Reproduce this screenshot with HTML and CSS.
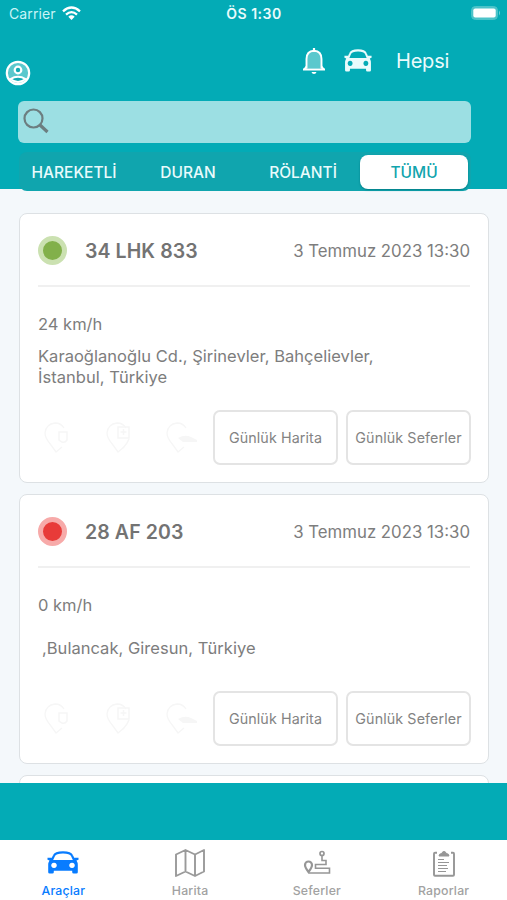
FILE: index.html
```
<!DOCTYPE html>
<html lang="tr">
<head>
<meta charset="utf-8">
<title>Araçlar</title>
<link rel="stylesheet" href="styles.css">
</head>
<body>
<svg class="defs" width="0" height="0" aria-hidden="true">
  <symbol id="car" viewBox="0 0 32 26" preserveAspectRatio="none">
    <path d="M4.800 10 7 5Q8.300 1.500 16 1.500T25 5l2.200 5" fill="none" stroke="currentColor" stroke-width="2.200"/>
    <path fill-rule="evenodd" d="M.5 7.300h4.200l1 2.400h20.600l1-2.400h4.200v2.200l-2 .8Q30.800 12.500 30.800 15v8q0 1.500-1.500 1.500h-2.600q-1.500 0-1.500-1.500v-1.500H6.800V23q0 1.500-1.500 1.500H2.700Q1.200 24.500 1.200 23v-8q0-2.500 1.300-4.700l-2-.8zM7 12.800a2.800 2.800 0 1 0 .01 0zM25 12.800a2.800 2.800 0 1 0 .01 0z" fill="currentColor"/>
  </symbol>
  <symbol id="pin" viewBox="0 0 30 32">
    <path d="M18 25 12 30 7 23Q1 16 1 11 2 2 11 1q6 0 9 5" fill="none" stroke="currentColor" stroke-width="1.300"/>
  </symbol>
</svg>

<header class="header">
  <div class="status">
    <span class="carrier">Carrier
      <svg class="wifi" width="19" height="14" viewBox="0 0 19 14"><g fill="none" stroke="#fff" stroke-width="2.300"><path d="M1 5.300Q9.500-2.300 18 5.300"/><path d="M4 8.600Q9.500 3.600 15 8.600"/></g><path d="M6.300 10.700Q9.500 8 12.700 10.700L9.500 14z" fill="#fff"/></svg>
    </span>
    <span class="clock">ÖS 1:30</span>
    <svg class="battery" width="30" height="14" viewBox="0 0 30 14"><rect x=".5" y=".5" width="26" height="13" rx="4" fill="#4cc3c9" stroke="#4cc3c9"/><rect x="2.300" y="2.500" width="22.400" height="9" rx="2" fill="#fff"/><path d="M28 4.500q2 2.500 0 5z" fill="#70d0d5"/></svg>
  </div>
  <div class="toolbar">
    <svg class="user" width="26" height="26" viewBox="0 0 26 26"><circle cx="13" cy="13" r="11.200" fill="#5bc8cd" stroke="#fff" stroke-width="2.200"/><circle cx="13" cy="10" r="3.300" fill="#12aab3" stroke="#fff" stroke-width="2.200"/><path d="M5.500 19q7.500-4.500 15 0-7.500 6-15 0z" fill="#12aab3" stroke="#fff" stroke-width="2"/></svg>
    <svg class="bell" width="24" height="28" viewBox="0 0 24 28"><path d="M4.500 21.500V12q0-7.700 7.500-8.200 7.500.5 7.500 8.200v9.500" fill="#5bc8cd" stroke="#fff" stroke-width="1.900"/><path d="M1 22.500h22M12 1v3" stroke="#fff" stroke-width="2.200"/><path d="M1 22.500 4.500 18v4zM23 22.500 19.500 18v4zM9.500 25h5q-.5 2-2.500 2t-2.500-2z" fill="#fff"/></svg>
    <svg class="topcar" width="28" height="24"><use href="#car" width="28" height="24"/></svg>
    <span class="all">Hepsi</span>
  </div>
  <div class="search"><svg width="27" height="27" viewBox="0 0 27 27" fill="none" stroke="#6c7e80"><circle cx="10.500" cy="10.500" r="9" stroke-width="2.200"/><path d="m17 17 7.500 7" stroke-width="3.200"/></svg></div>
  <nav class="segments">
    <span class="seg">HAREKETLİ</span><span class="seg">DURAN</span><span class="seg">RÖLANTİ</span><span class="seg active">TÜMÜ</span>
  </nav>
</header>

<main class="list">
  <article class="card">
    <div class="head"><i class="dot green"></i><b class="plate">34 LHK 833</b><time class="date">3 Temmuz 2023 13:30</time></div>
    <p class="speed">24 km/h</p>
    <p class="address">Karaoğlanoğlu Cd., Şirinevler, Bahçelievler,<br>İstanbul, Türkiye</p>
    <div class="actions">
      <svg class="ghost" width="30" height="32" viewBox="0 0 30 32"><use href="#pin" width="30" height="32"/><path d="M15 10h8v8q-2 3-5 2l-3-2z" fill="none" stroke="currentColor" stroke-width="1.500"/></svg>
      <svg class="ghost" width="30" height="32" viewBox="0 0 30 32"><use href="#pin" width="30" height="32"/><path d="M12 5h11v11H12zM17.500 7v6M14.500 10h6M23 17q-2 5-6 9" fill="none" stroke="currentColor" stroke-width="1.500"/></svg>
      <svg class="ghost" width="33" height="32" viewBox="0 0 33 32"><use href="#pin" width="30" height="32"/><path d="M12 16q7-4 13-1l6 3v2H17z" fill="currentColor"/></svg>
      <button class="btn">Günlük Harita</button><button class="btn">Günlük Seferler</button>
    </div>
  </article>
  <article class="card">
    <div class="head"><i class="dot red"></i><b class="plate">28 AF 203</b><time class="date">3 Temmuz 2023 13:30</time></div>
    <p class="speed">0 km/h</p>
    <p class="address single">,Bulancak, Giresun, Türkiye</p>
    <div class="actions">
      <svg class="ghost" width="30" height="32" viewBox="0 0 30 32"><use href="#pin" width="30" height="32"/><path d="M15 10h8v8q-2 3-5 2l-3-2z" fill="none" stroke="currentColor" stroke-width="1.500"/></svg>
      <svg class="ghost" width="30" height="32" viewBox="0 0 30 32"><use href="#pin" width="30" height="32"/><path d="M12 5h11v11H12zM17.500 7v6M14.500 10h6M23 17q-2 5-6 9" fill="none" stroke="currentColor" stroke-width="1.500"/></svg>
      <svg class="ghost" width="33" height="32" viewBox="0 0 33 32"><use href="#pin" width="30" height="32"/><path d="M12 16q7-4 13-1l6 3v2H17z" fill="currentColor"/></svg>
      <button class="btn">Günlük Harita</button><button class="btn">Günlük Seferler</button>
    </div>
  </article>
  <article class="card"></article>
</main>
<div class="band"></div>
<nav class="tabs">
  <a class="tab current"><svg width="32" height="28" viewBox="0 0 32 28"><use href="#car" y="2" width="32" height="24"/></svg><span>Araçlar</span></a>
  <a class="tab"><svg width="30" height="28" viewBox="0 0 30 28" fill="none" stroke="#9a9a9a" stroke-width="1.900" stroke-linejoin="round"><path d="M1 5.500 10.500 1 20 5.500 29 1v21.500L20 27l-9.500-4.500L1 27zM10.500 1v21.500M20 5.500V27"/></svg><span>Harita</span></a>
  <a class="tab"><svg width="28" height="28" viewBox="0 0 28 28" fill="none" stroke="#969696"><circle cx="19" cy="4.500" r="2" stroke-width="1.700"/><path d="M19 7v4.500h4v4H12.500v3.800H26.500V24H5.500" stroke-width="1.600"/><path d="M5.500 23Q2 18.500 2 16a3.500 3.500 0 0 1 7 0q0 2.500-3.500 7z" stroke-width="2.200"/></svg><span>Seferler</span></a>
  <a class="tab"><svg width="24" height="28" viewBox="0 0 24 28" fill="none" stroke="#969696"><path d="M5 3.800H3q-1 0-1 1v21q0 1 1 1h18q1 0 1-1v-21q0-1-1-1h-2" stroke-width="1.900"/><path d="M7 7q0-2.500 3-2.500a2 2 0 0 1 4 0q3 0 3 2.500z" fill="#969696"/><path d="M6 10.500h6M6 13.500h11M6 16.500h9M6 19.500h10M6 22.500h8" stroke-width="1.100"/></svg><span>Raporlar</span></a>
</nav>
</body>
</html>
```

FILE: styles.css
```
* { box-sizing: border-box; }
body { margin: 0; width: 507px; height: 900px; overflow: hidden; display: flex; flex-direction: column; background: #f4f8fb; font-family: Inter, "Liberation Sans", sans-serif; color: #7d7d7d; }
p { margin: 0; }
svg { display: block; flex: none; }
.defs { position: absolute; }
.header { height: 189px; flex: none; background: #03abb6; color: #e9fbfc; }
.status { height: 28px; display: grid; grid-template-columns: 1fr auto 1fr; align-items: center; padding: 0 6px 0 9px; font-size: 14px; }
.carrier { display: flex; gap: 6px; letter-spacing: .1px; margin-top: -2px; color: #c9f4f6; }
.clock { font-weight: 600; font-size: 14px; letter-spacing: .5px; margin: -2px 0 0 -2px; }
.battery { justify-self: end; margin-top: -2px; }
.wifi { margin-top: 1px; }
.toolbar { height: 73px; display: flex; align-items: flex-start; padding: 0 57px 0 5px; }
.user { margin-top: 32px; }
.bell { margin: 19px 18px 0 auto; }
.topcar { margin: 21px 24px 0 0; }
.all { width: 54px; font-size: 20px; line-height: 24px; margin-top: 21px; white-space: nowrap; letter-spacing: -.2px; }
.search { margin-left: 18px; width: 453px; height: 42px; border-radius: 6px; background: #9cdfe3; padding: 7px 5px; }
.segments { margin: 9px 0 0 19px; width: 452px; height: 39px; border-radius: 8px; background: #10a5ae; display: grid; grid-template-columns: 108px 116px 110px 108px; column-gap: 2px; padding: 3px 1px 2px; }
.seg { display: flex; align-items: center; justify-content: center; font-size: 15.500px; font-weight: 500; }
.active { background: #fff; color: #11a4ad; border-radius: 8px; box-shadow: 0 1px 2px #007d86; }
.list { flex: none; height: 594px; padding: 24px 18px 0 19px; display: flex; flex-direction: column; gap: 11px; overflow: hidden; }
.card { width: 470px; height: 270px; flex: none; background: #fff; border: 1px solid #dde1e4; border-radius: 8px; padding: 0 18px; }
.head { height: 73px; border-bottom: 2px solid #f0f0f0; display: flex; align-items: center; }
.dot { width: 29px; height: 29px; border-radius: 50%; border: 5px solid; flex: none; margin-top: 1px; }
.green { background: #82b04a; border-color: #cbe1b1; }
.red { background: #e83b39; border-color: #f7aaa9; }
.plate { margin: 2px 0 0 18px; font-size: 19.500px; font-weight: 600; letter-spacing: .1px; color: #737373; white-space: nowrap; }
.date { margin: 2px 0 0 auto; font-size: 16.800px; white-space: nowrap; }
.speed { margin-top: 27px; font-size: 16.500px; line-height: 20px; }
.address { height: 42px; margin-top: 12px; font-size: 16.500px; line-height: 21px; letter-spacing: .03px; white-space: nowrap; }
.single { padding: 11px 0 0 4px; }
.actions { height: 55px; margin-top: 22px; display: flex; align-items: center; }
.ghost { color: #f6f6f6; margin-left: 6px; margin-right: 32px; }
.ghost + .ghost { margin-left: 0; margin-right: 30px; }
.ghost + .ghost + .ghost { margin-right: 14px; }
.btn { width: 125px; height: 55px; flex: none; padding: 0; border: 2px solid #e4e4e4; border-radius: 7px; background: #fff; color: #838383; font: 400 14.300px Inter, sans-serif; letter-spacing: .1px; white-space: nowrap; }
.btn + .btn { margin-left: 8px; }
.band { height: 57px; flex: none; background: #03abb6; }
.tabs { height: 60px; flex: none; display: grid; grid-template-columns: repeat(4, 1fr); background: #fff; }
.tab { display: flex; flex-direction: column; align-items: center; padding-top: 9px; font-size: 12.300px; font-weight: 500; line-height: 16px; letter-spacing: .2px; color: #a2a2a2; gap: 6px; }
.current { color: #087cff; }
```
